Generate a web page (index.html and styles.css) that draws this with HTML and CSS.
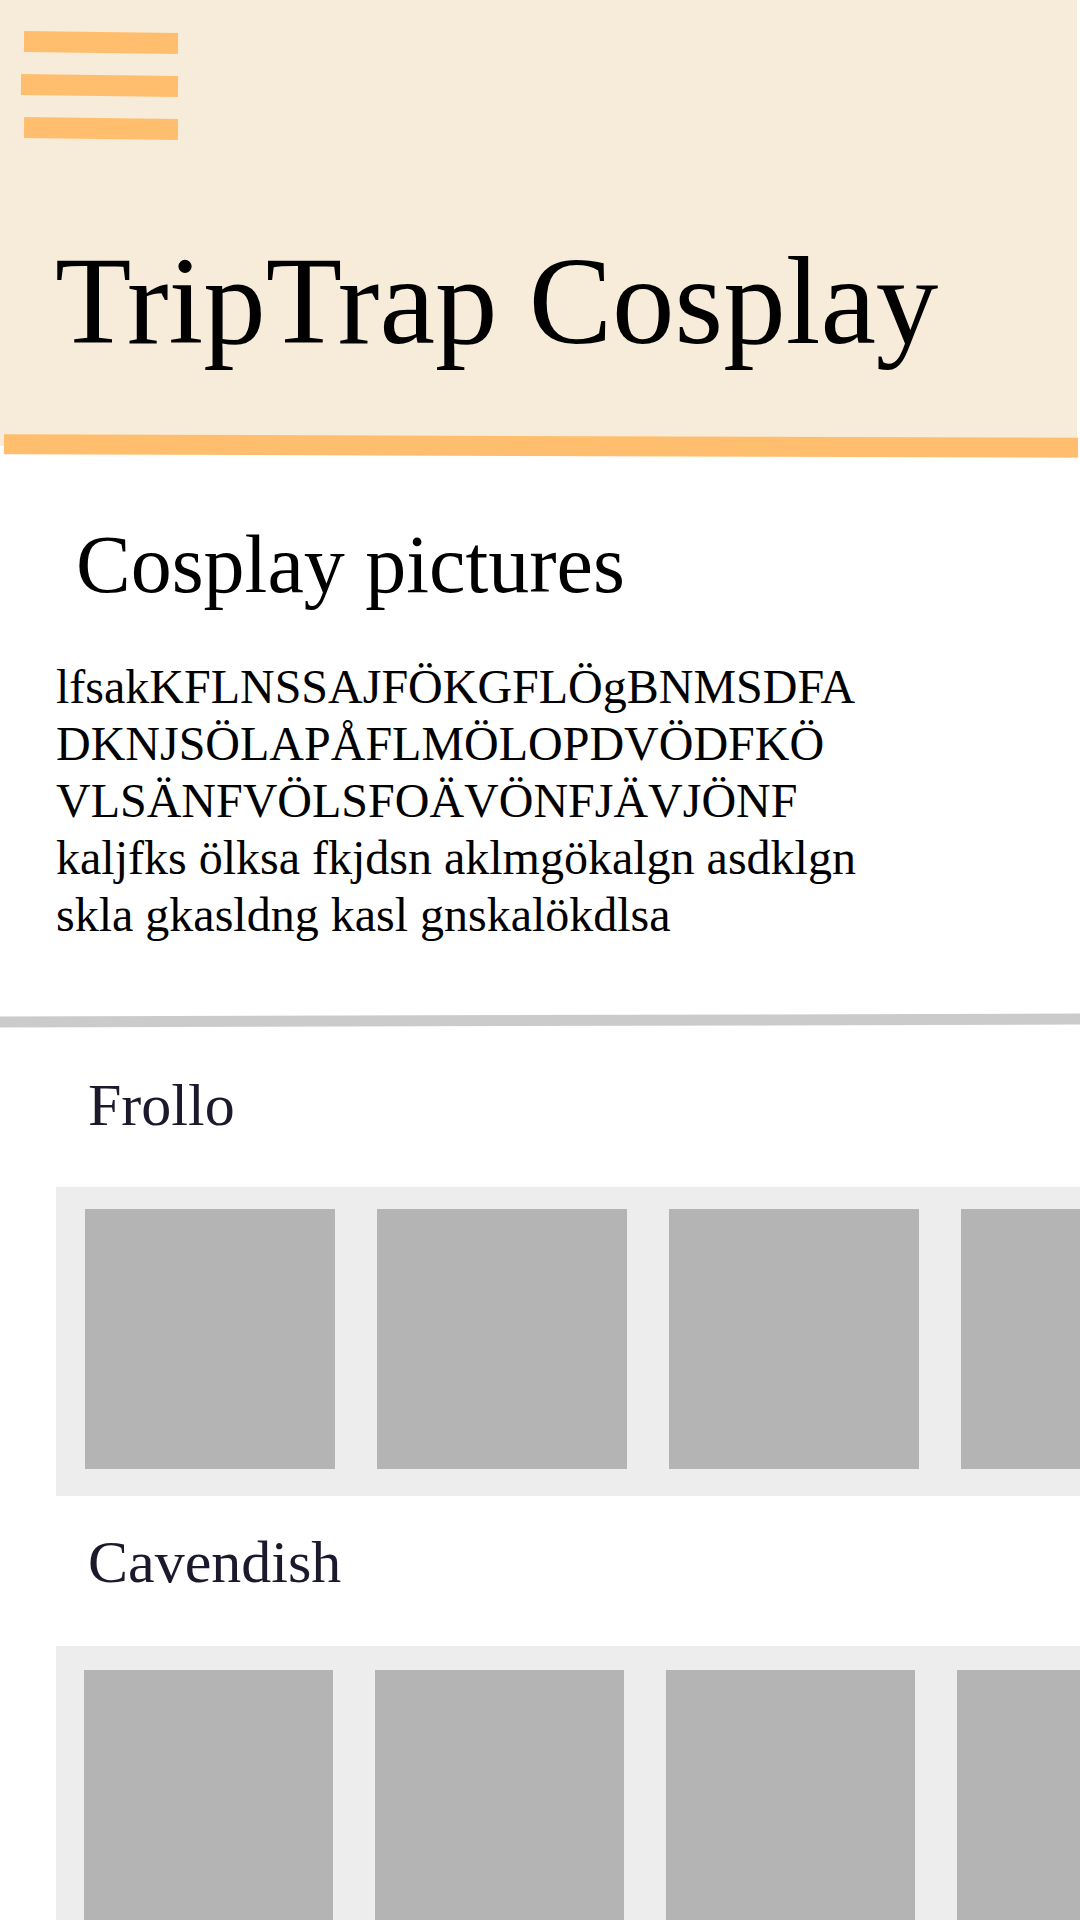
FILE: index.html
```html
<!DOCTYPE html>
<html lang="en">
<head>
    <meta charset="UTF-8">
    <meta name="viewport" content="width=device-width, initial-scale=1.0">
    <title>TripTrap Cosplay</title>
    <link rel="stylesheet" href="styles.css">
</head>
<body>
    <header class="site-header">
        <div class="menu-btn">
            <span class="bar"></span>
            <span class="bar bar-mid"></span>
            <span class="bar"></span>
        </div>
        <h1 class="site-title">TripTrap Cosplay</h1>
    </header>
    <div class="header-stripe"></div>

    <section class="intro">
        <h2 class="intro-title">Cosplay pictures</h2>
        <p class="intro-text">lfsakKFLNSSAJFÖKGFLÖgBNMSDFA<br>DKNJSÖLAPÅFLMÖLOPDVÖDFKÖ<br>VLSÄNFVÖLSFOÄVÖNFJÄVJÖNF kaljfks ölksa fkjdsn aklmgökalgn asdklgn skla gkasldng kasl gnskalökdlsa</p>
    </section>

    <div class="divider"></div>

    <section class="cosplay">
        <h3 class="cosplay-name">Frollo</h3>
        <div class="gallery">
            <div class="tile"></div>
            <div class="tile"></div>
            <div class="tile"></div>
            <div class="tile"></div>
            <div class="tile"></div>
        </div>
    </section>

    <section class="cosplay">
        <h3 class="cosplay-name">Cavendish</h3>
        <div class="gallery">
            <div class="tile"></div>
            <div class="tile"></div>
            <div class="tile"></div>
            <div class="tile"></div>
            <div class="tile"></div>
        </div>
    </section>
</body>
</html>
```

FILE: styles.css
```css
* {
    margin: 0;
    padding: 0;
    box-sizing: border-box;
}
body {
    font-family: 'Liberation Serif', 'Times New Roman', serif;
    background: #ffffff;
    color: #000000;
    overflow-x: hidden;
}
.site-header {
    background: #f7ecd9;
    height: 446px;
    margin-right: 3px;
    padding-top: 32px;
}
.menu-btn {
    display: flex;
    flex-direction: column;
    gap: 22px;
}
.bar {
    display: block;
    width: 154px;
    height: 21px;
    margin-left: 24px;
    background: #ffbe6d;
    transform: rotate(0.7deg);
}
.bar-mid {
    width: 157px;
    margin-left: 21px;
}
.site-title {
    font-size: 125px;
    font-weight: 400;
    line-height: 124px;
    margin-top: 100px;
    padding-left: 55px;
}
.header-stripe {
    height: 20px;
    margin: -10px 2px 0 4px;
    background: #ffbe6d;
    transform: rotate(0.19deg);
}
.intro {
    padding-left: 56px;
}
.intro-title {
    font-size: 82px;
    font-weight: 400;
    line-height: 82px;
    margin-top: 68px;
    padding-left: 20px;
}
.intro-text {
    font-size: 48px;
    line-height: 57px;
    max-width: 820px;
    margin-top: 52px;
}
.divider {
    height: 11px;
    margin-top: 72px;
    background: #cbcbcb;
    transform: rotate(-0.15deg);
}
.cosplay {
    padding-left: 56px;
}
.cosplay-name {
    font-size: 60px;
    font-weight: 400;
    line-height: 60px;
    color: #1b1a2c;
    margin-top: 49px;
    padding-left: 32px;
}
.cosplay + .cosplay .cosplay-name {
    margin-top: 36px;
}
.gallery {
    display: flex;
    gap: 42px;
    margin-top: 52px;
    padding: 22px 0 27px 29px;
    background: #ededed;
    overflow: hidden;
}
.cosplay + .cosplay .gallery {
    margin-top: 54px;
    padding: 24px 0 27px 28px;
}
.tile {
    flex-shrink: 0;
    width: 250px;
    height: 260px;
    background: #b4b4b4;
}
.cosplay + .cosplay .tile {
    width: 249px;
}
```
